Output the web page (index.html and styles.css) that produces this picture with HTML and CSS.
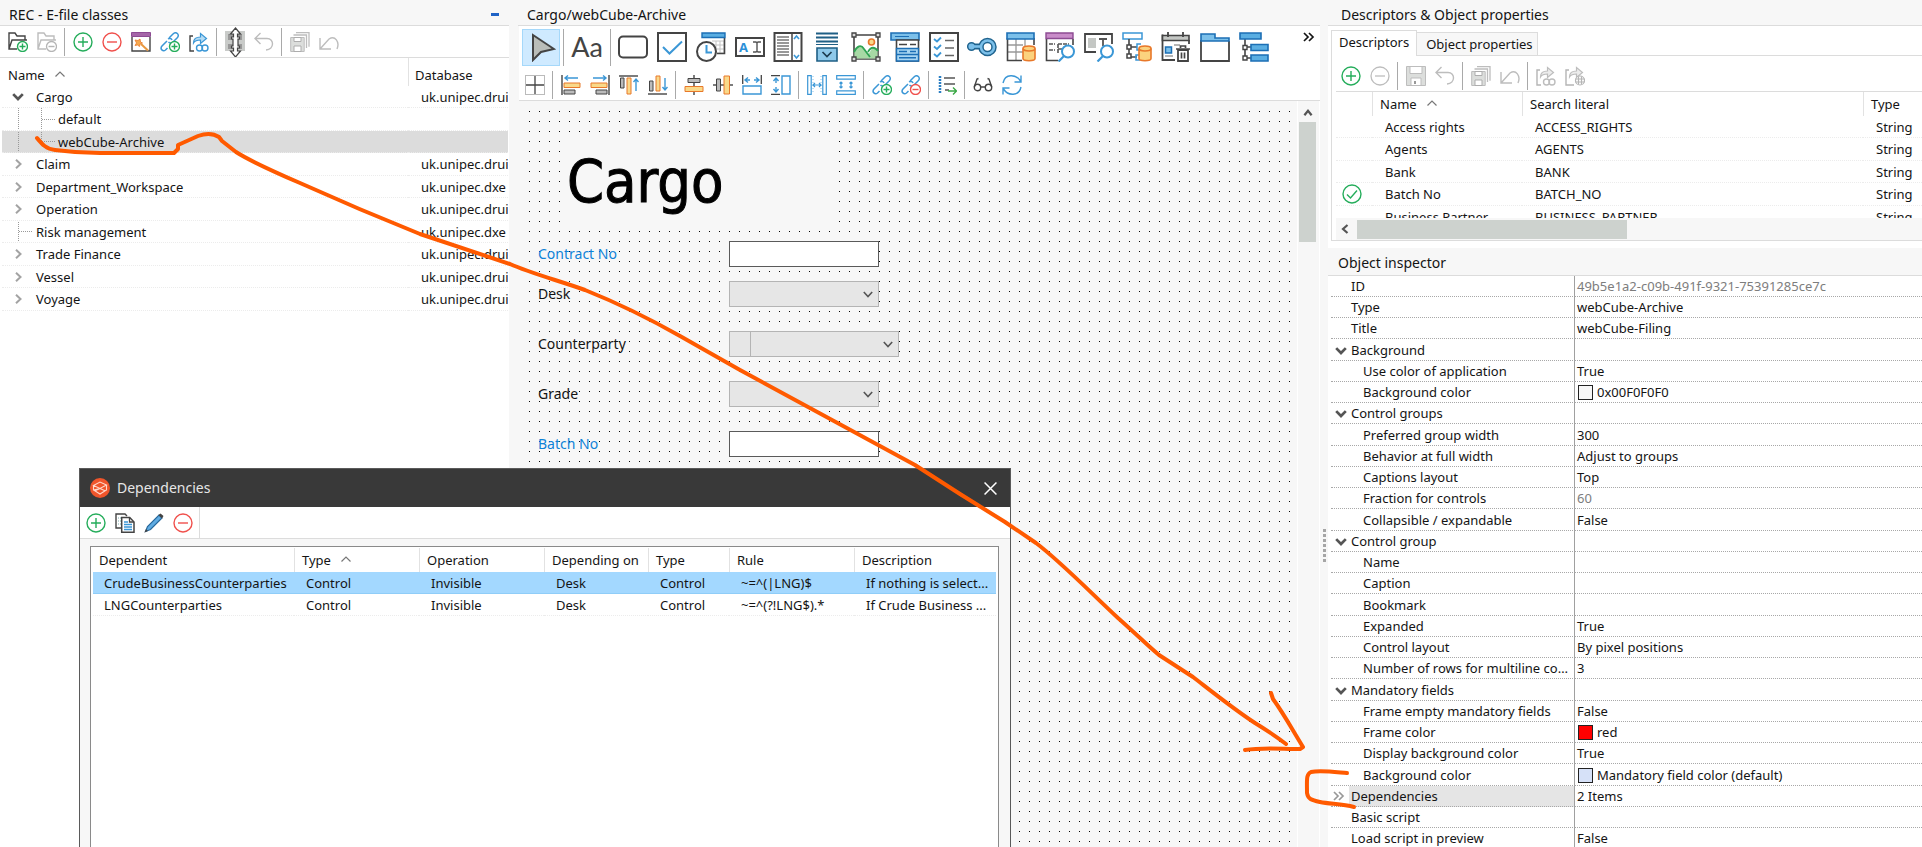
FILE: index.html
```html
<!DOCTYPE html>
<html lang="en">
<head>
<meta charset="utf-8">
<title>REC - E-file classes</title>
<link rel="stylesheet" href="styles.css">
</head>
<body>
<svg class="defs" aria-hidden="true">
  <symbol id="i-plus" viewBox="0 0 20 20"><g fill="none" stroke="#25ad5b" stroke-width="1.4"><circle cx="10" cy="10" r="9"/><path d="M10 5v10M5 10h10"/></g></symbol>
  <symbol id="i-minus" viewBox="0 0 20 20"><g fill="none" stroke="#f0504c" stroke-width="1.4"><circle cx="10" cy="10" r="9"/><path d="M5 10h10"/></g></symbol>
  <symbol id="i-minus-off" viewBox="0 0 20 20"><g fill="none" stroke="#bdbdbd" stroke-width="1.3"><circle cx="10" cy="10" r="9"/><path d="M5 10h10"/></g></symbol>
  <symbol id="i-ok" viewBox="0 0 20 20"><g fill="none" stroke="#25ad5b" stroke-width="1.4"><circle cx="10" cy="10" r="9"/><path d="M5 10.500l3.500 3.500L15 6.500"/></g></symbol>
  <symbol id="i-folder-add" viewBox="0 0 20 20"><path d="M9 17H1V1h6l2 3h8v4M1 17L4 8h15" fill="none" stroke="#444" stroke-width="1.400"/><circle cx="14.500" cy="14.500" r="5" fill="#fff" stroke="#25ad5b" stroke-width="1.400"/><path d="M14.500 11.500v6M11.500 14.500h6" stroke="#25ad5b" stroke-width="1.400"/></symbol>
  <symbol id="i-folder-del" viewBox="0 0 20 20"><path d="M9 17H1V1h6l2 3h8v4M1 17L4 8h15" fill="none" stroke="#bdbdbd" stroke-width="1.400"/><circle cx="14.500" cy="14.500" r="5" fill="#fff" stroke="#b5b5b5" stroke-width="1.300"/><path d="M11.500 14.500h6" stroke="#b5b5b5" stroke-width="1.400"/></symbol>
  <symbol id="i-wizard" viewBox="0 0 20 20"><path d="M1 5v14h18V5" fill="none" stroke="#444" stroke-width="1.400"/><path d="M.5.500h19v4H.5z" fill="#a566a8" stroke="#8d4b93"/><path d="M4 8l3 .5L9 7l.5 3 2 1-2.500 1-.5 2.500-2-1.500-2.500.5L5.500 11z" fill="#f6a94e" stroke="#e8782a" stroke-width=".8"/><path d="M10 12l7 6.500" stroke="#e89840" stroke-width="2"/></symbol>
  <symbol id="i-chain" viewBox="0 0 20 20"><g fill="none" stroke="#3b97d6" stroke-width="1.500"><path d="M9 6l4-4c3-3 7 .5 4.500 3.500L13 10c-1.500 1.500-3.500 1-4.500 0"/><path d="M8 7c1.500-1 3.500-.5 4 1M7 9l-5 5c-2.500 3 1 6 3.500 4l2-2"/></g></symbol>
  <symbol id="i-chain-add" viewBox="0 0 20 20"><use href="#i-chain"/><circle cx="14.500" cy="14.500" r="5" fill="#fff" stroke="#25ad5b" stroke-width="1.400"/><path d="M14.500 11.500v6M11.500 14.500h6" stroke="#25ad5b" stroke-width="1.400"/></symbol>
  <symbol id="i-chain-del" viewBox="0 0 20 20"><use href="#i-chain"/><circle cx="14.500" cy="14.500" r="5" fill="#fff" stroke="#f0504c" stroke-width="1.400"/><path d="M11.500 14.500h6" stroke="#f0504c" stroke-width="1.400"/></symbol>
  <symbol id="i-share" viewBox="0 0 20 20"><path d="M4 4H1v15h4" fill="none" stroke="#444" stroke-width="1.400"/><path d="M4.500 11c0-4 2.500-6 7-6V1.500l6 5-6 5V8c-3.500 0-5.500.5-7 3z" fill="#b6dcf4" stroke="#3b97d6" stroke-width="1.200"/><g fill="none" stroke="#3b97d6" stroke-width="1.400"><circle cx="10.500" cy="16" r="3"/><circle cx="16" cy="16" r="3"/></g></symbol>
  <symbol id="i-share-off" viewBox="0 0 20 20"><path d="M4 4H1v15h4" fill="none" stroke="#b5b5b5" stroke-width="1.400"/><path d="M4.500 11c0-4 2.500-6 7-6V1.500l6 5-6 5V8c-3.500 0-5.500.5-7 3z" fill="#ececec" stroke="#bdbdbd" stroke-width="1.200"/><g fill="none" stroke="#bdbdbd" stroke-width="1.400"><circle cx="10.500" cy="16" r="3"/><circle cx="16" cy="16" r="3"/></g></symbol>
  <symbol id="i-globe-off" viewBox="0 0 20 20"><path d="M4 4H1v15h8" fill="none" stroke="#b5b5b5" stroke-width="1.400"/><path d="M4.500 11c0-4 2.500-6 7-6V1.500l6 5-6 5V8c-3.500 0-5.500.5-7 3z" fill="#ececec" stroke="#bdbdbd" stroke-width="1.200"/><g fill="#fff" stroke="#b5b5b5" stroke-width="1.200"><circle cx="15" cy="14.500" r="4.500"/><path d="M10.500 13h9M10.500 16h9M13.500 10.500v8M16.500 10.500v8"/></g></symbol>
  <symbol id="i-save-off" viewBox="0 0 20 20"><path d="M.5.500h19v19H.5z" fill="#dcdedc" stroke="#bdbdbd"/><path d="M4 .5h12v7H4zM5 12h10v7.500H5z" fill="#fff" stroke="#bdbdbd"/><path d="M8 15h2v3H8z" fill="#999"/></symbol>
  <symbol id="i-saveall-off" viewBox="0 0 20 20"><path d="M6 .7h13v14M3.500 3h13v13" fill="none" stroke="#bdbdbd" stroke-width="1.300"/><path d="M.7 5.500h13.500v14H.7z" fill="#dcdedc" stroke="#bdbdbd"/><path d="M4 5.500h7v4H4zM4 14h7v5.500H4z" fill="#fff" stroke="#adadad"/></symbol>
  <symbol id="i-undo-off" viewBox="0 0 20 20"><path d="M6.500 1L1 6.500 6.500 12M1 6.500h12c7.500 0 7.500 11-1 11.500" fill="none" stroke="#bdbdbd" stroke-width="1.400"/></symbol>
  <symbol id="i-revert-off" viewBox="0 0 20 20"><path d="M1 6v11h11M1 17L10 7c6-4 11 3 8 10" fill="none" stroke="#bdbdbd" stroke-width="1.400"/></symbol>
  <symbol id="i-rename" viewBox="0 0 24 30"><path d="M2 4h20v20H2z" fill="#c9cbc9"/><path d="M5 7h6v6H5zM5 17h6v5H5zM14 7h5v6h-5zM14 17h5v5h-5z" fill="#999"/><path d="M12.500 1l5 6h-3v3h2v2h-1.500v7h1.500v2h-2v3h3l-5 6-5-6h3v-3h-2v-2h1.500v-7H8.500v-2h2V7h-3z" fill="#fff" stroke="#444" stroke-width="1.200"/></symbol>
  <symbol id="i-copy" viewBox="0 0 20 20"><path d="M6 15H1V1h9l2 2" fill="none" stroke="#444" stroke-width="1.400"/><path d="M3 5h4M3 8h3M3 11h3" stroke="#7aa" stroke-dasharray="1 1"/><path d="M6.700 4.500h8l4.300 4.500v10.300H6.700z" fill="#fff" stroke="#444" stroke-width="1.500"/><path d="M14.500 4.500V9H19" fill="none" stroke="#444" stroke-width="1.300"/><path d="M9 9h4M9 11.500h8M9 14h8M9 16.500h8" stroke="#3b97d6" stroke-width="1.300"/></symbol>
  <symbol id="i-pencil" viewBox="0 0 20 20"><path d="M1.500 18.500l2-5L15 2l3 3L6.500 16.500z" fill="#5fabe2" stroke="#27689c" stroke-width="1.200"/><path d="M14.500 2L16.500.500 19.500 3 18 5.500z" fill="#444"/><path d="M.5 19.500l1.500-3.500 2 2z" fill="#444"/></symbol>
  <symbol id="i-up" viewBox="0 0 10 6"><path d="M.5 5.500L5 1l4.500 4.500" fill="none" stroke="#777" stroke-width="1.200"/></symbol>
  <symbol id="i-down" viewBox="0 0 10 7"><path d="M.8 1L5 5.500 9.200 1" fill="none" stroke="#555" stroke-width="1.600"/></symbol>
  <symbol id="i-open" viewBox="0 0 10 7"><path d="M.8 1L5 5.200 9.200 1" fill="none" stroke="#555" stroke-width="2.400"/></symbol>
  <symbol id="i-right" viewBox="0 0 7 10"><path d="M1 .8L5.500 5 1 9.200" fill="none" stroke="#a3a3a3" stroke-width="2"/></symbol>
  <symbol id="i-caret-up" viewBox="0 0 8 8"><path d="M.8 6.500L4 2.500l3.200 4" fill="none" stroke="#555" stroke-width="2"/></symbol>
  <symbol id="i-caret-left" viewBox="0 0 8 10"><path d="M6.500 1L2 5l4.500 4" fill="none" stroke="#555" stroke-width="2.200"/></symbol>
  <symbol id="i-more" viewBox="0 0 12 10"><path d="M1 1l4 4-4 4M6 1l4 4-4 4" fill="none" stroke="currentColor" stroke-width="1.700"/></symbol>

  <symbol id="a-grid" viewBox="0 0 20 20"><path d="M.5.500h19v19H.5z" fill="none" stroke="#777" stroke-dasharray="1 1"/><path d="M10 1v18M1 10h18" stroke="#444" stroke-width="1.300"/></symbol>
  <symbol id="a-left" viewBox="0 0 20 20"><path d="M1 0v20" stroke="#444" stroke-width="1.400"/><path d="M17 3H4M7 0.500L4 3l3 2.500" fill="none" stroke="#3b97d6" stroke-width="1.400"/><path d="M3 8h16v4.500H3z" fill="#f9d98a" stroke="#e8782a"/><path d="M3 15h11v4H3z" fill="#bbb" stroke="#444"/></symbol>
  <symbol id="a-right" viewBox="0 0 20 20"><path d="M19 0v20" stroke="#444" stroke-width="1.400"/><path d="M3 3h13M13 0.500L16 3l-3 2.500" fill="none" stroke="#3b97d6" stroke-width="1.400"/><path d="M1 8h16v4.500H1z" fill="#f9d98a" stroke="#e8782a"/><path d="M6 15h11v4H6z" fill="#bbb" stroke="#444"/></symbol>
  <symbol id="a-top" viewBox="0 0 20 20"><path d="M0 1h19" stroke="#444" stroke-width="1.400"/><path d="M1.500 3h3.500v10H1.500z" fill="#bbb" stroke="#444"/><path d="M8 3h4v16H8z" fill="#f9d98a" stroke="#e8782a"/><path d="M17 16V4M14.500 7L17 4l2.500 3" fill="none" stroke="#3b97d6" stroke-width="1.400"/></symbol>
  <symbol id="a-bottom" viewBox="0 0 20 20"><path d="M0 19h19" stroke="#444" stroke-width="1.400"/><path d="M1.500 6h3.500v10H1.500z" fill="#bbb" stroke="#444"/><path d="M8 1h4v15H8z" fill="#f9d98a" stroke="#e8782a"/><path d="M17 3v12M14.500 12L17 15l2.500-3" fill="none" stroke="#3b97d6" stroke-width="1.400"/></symbol>
  <symbol id="a-hcenter" viewBox="0 0 20 20"><path d="M10 0v20" stroke="#444" stroke-width="1.400"/><path d="M4 3.500h12v4H4z" fill="#bbb" stroke="#444"/><path d="M1 11.500h18v5H1z" fill="#f9d98a" stroke="#e8782a"/></symbol>
  <symbol id="a-vcenter" viewBox="0 0 20 20"><path d="M0 10h20" stroke="#444" stroke-width="1.400"/><path d="M3.500 4h4v12h-4z" fill="#bbb" stroke="#444"/><path d="M11 1h5.500v18H11z" fill="#f9d98a" stroke="#e8782a"/></symbol>
  <symbol id="a-width" viewBox="0 0 20 20"><path d="M.7 0v9M19.300 0v9" stroke="#444" stroke-width="1.300"/><path d="M1 11h18v8H1z" fill="none" stroke="#3b97d6" stroke-width="1.400"/><path d="M3 5h5M12 5h5M6 2.500L3 5l3 2.500M14 2.500L17 5l-3 2.500" fill="none" stroke="#3b97d6" stroke-width="1.400"/></symbol>
  <symbol id="a-height" viewBox="0 0 20 20"><path d="M0 .7h9M0 19.300h9" stroke="#444" stroke-width="1.300"/><path d="M11 1h8v18h-8z" fill="none" stroke="#3b97d6" stroke-width="1.400"/><path d="M5 3v5M5 12v5M2.500 6L5 3l2.500 3M2.500 14L5 17l2.500-3" fill="none" stroke="#3b97d6" stroke-width="1.400"/></symbol>
  <symbol id="a-hspace" viewBox="0 0 20 20"><g fill="none" stroke="#3b97d6" stroke-width="1.200"><path d="M.7.700h3.500v18.600H.7zM15.800.700h3.500v18.600h-3.500z"/><path d="M6 10h8M8 8l-2 2 2 2M12 8l2 2-2 2"/></g><path d="M6 1v18M14 1v18" stroke="#3b97d6" stroke-dasharray="1 2" stroke-width=".6"/></symbol>
  <symbol id="a-vspace" viewBox="0 0 20 20"><g fill="none" stroke="#3b97d6" stroke-width="1.200"><path d="M.7.700h18.600v3.500H.7zM.7 15.800h18.600v3.500H.7z"/><path d="M5 7v6M3.500 8.500L5 7l1.500 1.500M3.500 11.500L5 13l1.500-1.500M15 7v6M13.500 8.500L15 7l1.500 1.500M13.500 11.500L15 13l1.500-1.500"/></g></symbol>
  <symbol id="a-order" viewBox="0 0 20 20"><path d="M3 1v18" stroke="#2b7fc4" stroke-width="2.500" stroke-dasharray="2 1"/><path d="M7 3h11M7 9h11M8 15h4" stroke="#555" stroke-width="1.400"/><path d="M11 16h8M16 12.500l3.500 3.500-3.500 3.500" fill="none" stroke="#3aa845" stroke-width="1.400"/></symbol>
  <symbol id="a-glasses" viewBox="0 0 20 20"><g fill="none" stroke="#444" stroke-width="1.400"><circle cx="4.500" cy="12.500" r="3.200"/><circle cx="15.500" cy="12.500" r="3.200"/><path d="M8 12h4M1.300 12L4 4l1.500-.5M18.700 12L16 4l-1.500-.5"/></g></symbol>
  <symbol id="a-refresh" viewBox="0 0 20 20"><g fill="none" stroke="#3b97d6" stroke-width="1.400"><path d="M1 8C3-1.500 14-1 18.500 6M19 .5V7h-6.500M19 12c-2 9.500-13 9-17.500 2M1 19.500V13h6.500"/></g></symbol>

  <symbol id="b-rect" viewBox="0 0 30 30"><rect x="1" y="4.500" width="28" height="21" rx="4" fill="none" stroke="#444" stroke-width="2"/></symbol>
  <symbol id="b-check" viewBox="0 0 30 30"><path d="M1 1h28v28H1z" fill="#fff" stroke="#444" stroke-width="2"/><path d="M6 15l6.500 6.500L25 9.500" fill="none" stroke="#3b97d6" stroke-width="2"/></symbol>
  <symbol id="b-clock" viewBox="0 0 30 30"><path d="M16 9h12v12H18M20 9v12M24 9v12M16 13h12M16 17h12" fill="none" stroke="#c4c4c4"/><path d="M28.500 6v15.500H21" fill="none" stroke="#444" stroke-width="1.600"/><path d="M6 1h23v4.500H6z" fill="#5aaee2" stroke="#1c6fb5" stroke-width="1.400"/><circle cx="10.500" cy="19.500" r="9.500" fill="#fff" stroke="#444" stroke-width="2"/><path d="M10.500 13v7.500H16" fill="none" stroke="#3b97d6" stroke-width="2"/></symbol>
  <symbol id="b-list" viewBox="0 0 30 30"><path d="M1.500 1h27v28h-27z" fill="#fff" stroke="#444" stroke-width="2"/><path d="M19 1v28" stroke="#444" stroke-width="1.500"/><path d="M4 5h12M4 8h12M4 11h12M4 14h12M4 17h12M4 20h12M4 23h12" stroke="#777" stroke-width="1.300"/><path d="M21 7l2.500-3L26 7M21 23l2.500 3 2.500-3" fill="none" stroke="#3b97d6" stroke-width="1.600"/></symbol>
  <symbol id="b-combo" viewBox="0 0 30 30"><path d="M4 1.500h22M4 5.500h22M4 9.500h22" stroke="#1f5f85" stroke-width="1.800"/><path d="M4 12.500h22" stroke="#1f5f85"/><path d="M5 16h20v13H5z" fill="#8ec9ea" stroke="#1f5f85" stroke-width="1.600"/><path d="M10.500 20l4.500 4.500 4.500-4.500" fill="none" stroke="#1d3c50" stroke-width="1.700"/></symbol>
  <symbol id="b-image" viewBox="0 0 30 30"><path d="M3 3h24v24H3z" fill="#fff" stroke="#444" stroke-width="1.600"/><path d="M3.500 26.500V19c3-5 7-7 10-2l4 5 4-6c2-1 4-1 5 3v7.500z" fill="#a7d9a5"/><path d="M3 20c3-6 7-8 10-3l6 8M17 20c3-6 7-5 10-1" fill="none" stroke="#2fa353" stroke-width="1.800"/><circle cx="20.500" cy="10" r="3" fill="#f9d98a" stroke="#e8782a" stroke-width="1.600"/><g fill="#ddd" stroke="#444" stroke-width="1.300"><path d="M1 1h4v4H1zM25 1h4v4h-4zM1 25h4v4H1zM25 25h4v4h-4z"/></g></symbol>
  <symbol id="b-menu" viewBox="0 0 30 30"><path d="M1 1h28v7H1z" fill="#7cc0ea" stroke="#1c6fb5" stroke-width="1.600"/><path d="M5 4.500h14" stroke="#1c6fb5"/><path d="M6.500 8h22v21h-22z" fill="#fff" stroke="#444" stroke-width="1.600"/><path d="M9 12.500h8M20 12.500h6" stroke="#444" stroke-width="1.600"/><path d="M6.500 16.500h22v6h-22zM6.500 22.500h22V29h-22z" fill="#a8d6f2" stroke="#1c6fb5" stroke-width="1.400"/><path d="M9 19.500h8M20 19.500h6M9 25.800h17" stroke="#1c6fb5" stroke-width="1.600"/></symbol>
  <symbol id="b-checks" viewBox="0 0 30 30"><path d="M1 1h28v28H1z" fill="#fff" stroke="#444" stroke-width="2"/><path d="M5 7l3 2.500L12 5.500M5 14.500l3 2.500L12 13M5 22l3 2.500 4-4" fill="none" stroke="#3b97d6" stroke-width="1.800"/><path d="M16 8.500h9M16 16h9M16 23.500h9" stroke="#666" stroke-width="1.600"/></symbol>
  <symbol id="b-node" viewBox="0 0 30 30"><path d="M8 14.500h5" stroke="#20648f" stroke-width="6"/><circle cx="4.500" cy="14.500" r="3.800" fill="#7cc0ea" stroke="#20648f" stroke-width="1.500"/><circle cx="20.500" cy="15" r="6.500" fill="#fff" stroke="#20648f" stroke-width="5.500"/><circle cx="20.500" cy="15" r="6.500" fill="none" stroke="#7cc0ea" stroke-width="2.600"/><path d="M6 14.500h8" stroke="#7cc0ea" stroke-width="2.600"/></symbol>
  <symbol id="b-cyl" viewBox="0 0 14 17"><path d="M1 3.500v10c0 3 12 3 12 0v-10" fill="#fbd27e" stroke="#e8782a" stroke-width="1.600"/><ellipse cx="7" cy="3.500" rx="6" ry="2.500" fill="#fbd27e" stroke="#e8782a" stroke-width="1.600"/></symbol>
  <symbol id="b-tabledb" viewBox="0 0 30 30"><path d="M2 13h15M2 20h15M10 6v22M19 6v8" fill="none" stroke="#999" stroke-width="1.300"/><path d="M1.500 6v22.500H16M28 6v7" fill="none" stroke="#444" stroke-width="1.600"/><path d="M1 1h27v6H1z" fill="#7cc0ea" stroke="#1c6fb5" stroke-width="1.600"/><use href="#b-cyl" x="16" y="13" width="14" height="17"/></symbol>
  <symbol id="b-formfind" viewBox="0 0 30 30"><path d="M1.500 7v21.500H13M28 7v6" fill="none" stroke="#444" stroke-width="1.600"/><path d="M1 1h27v5.500H1z" fill="#c98cc9" stroke="#8d4b93" stroke-width="1.400"/><path d="M4 12h6M4 18h6M13 12v10M13 12h11M13 17h5" stroke="#555" stroke-width="1.600" stroke-dasharray="4 1"/><circle cx="23" cy="19.500" r="6" fill="#fff" stroke="#3b97d6" stroke-width="2"/><path d="M19 24l-5.500 5.500" stroke="#3b97d6" stroke-width="2.200"/></symbol>
  <symbol id="b-findtext" viewBox="0 0 30 30"><path d="M12 20H1V2h27v10" fill="#fff" stroke="#444" stroke-width="1.800"/><path d="M4 6h8v10H4z" fill="#c4c7c4"/><path d="M15 7h8M19 7v7" stroke="#555" stroke-width="1.800"/><circle cx="23" cy="19.500" r="6" fill="#fff" stroke="#3b97d6" stroke-width="2"/><path d="M19 24l-5.500 5.500" stroke="#3b97d6" stroke-width="2.200"/></symbol>
  <symbol id="b-treedb" viewBox="0 0 30 30"><path d="M1 1h19v6H1z" fill="#fff" stroke="#3b97d6" stroke-width="1.500"/><path d="M7 7v17M8 15h7M8 25h7" fill="none" stroke="#444" stroke-width="1.600"/><path d="M5 13h4v4H5zM5 22h4v4H5z" fill="#fff" stroke="#444" stroke-width="1.500"/><path d="M19 12h-4v6h4M18 23h-4v5h4" fill="none" stroke="#3b97d6" stroke-width="1.500"/><use href="#b-cyl" x="16" y="13" width="14" height="17"/></symbol>
  <symbol id="b-caltrash" viewBox="0 0 30 30"><path d="M1.500 2.500V28H14M28 8v4" fill="none" stroke="#444" stroke-width="1.800"/><path d="M1.500 3.500H28v5H1.500z" fill="#c4c7c4" stroke="#444" stroke-width="1.600"/><path d="M7 0v5M22 0v5" stroke="#444" stroke-width="1.800"/><path d="M4.500 15h6v6h-6z" fill="#7cc0ea" stroke="#1c6fb5" stroke-width="1.500"/><path d="M13 13h6M4 24h8" stroke="#b5b5b5" stroke-width="2"/><path d="M17 18h10v11H17z" fill="#fff" stroke="#444" stroke-width="1.800"/><path d="M15 17h14M19.500 16v-2h5v2M20.500 20.500v6M23.500 20.500v6" fill="none" stroke="#444" stroke-width="1.700"/></symbol>
  <symbol id="b-folder" viewBox="0 0 30 30"><path d="M1 8v21h28V9" fill="#fff" stroke="#444" stroke-width="1.800"/><path d="M1 9V2h14v4h14v3z" fill="#7cc0ea" stroke="#1c6fb5" stroke-width="1.600"/></symbol>
  <symbol id="b-tree" viewBox="0 0 30 30"><path d="M6 7v19h6M6 15h6" fill="none" stroke="#444" stroke-width="1.600"/><path d="M4 13.500h4v4H4zM4 24h4v4H4z" fill="#fff" stroke="#444" stroke-width="1.400"/><path d="M1 1h21v6H1zM12 12.500h17v6H12zM12 23h17v6H12z" fill="#5aaee2" stroke="#1c6fb5" stroke-width="1.600"/></symbol>
</svg>

<div class="app">
  <section class="classes">
    <header class="caption"><h2>REC - E-file classes</h2><button class="minimize" aria-label="Minimize"></button></header>
    <div class="tools">
      <button aria-label="Add folder"><svg><use href="#i-folder-add"/></svg></button>
      <button aria-label="Remove folder"><svg><use href="#i-folder-del"/></svg></button>
      <i class="sep"></i>
      <button aria-label="Add"><svg><use href="#i-plus"/></svg></button>
      <button aria-label="Remove"><svg><use href="#i-minus"/></svg></button>
      <button aria-label="Wizard"><svg><use href="#i-wizard"/></svg></button>
      <button aria-label="Add link"><svg><use href="#i-chain-add"/></svg></button>
      <button aria-label="Export link"><svg><use href="#i-share"/></svg></button>
      <i class="sep"></i>
      <button aria-label="Rename"><svg class="tall"><use href="#i-rename"/></svg></button>
      <button aria-label="Undo"><svg><use href="#i-undo-off"/></svg></button>
      <i class="sep"></i>
      <button aria-label="Save all"><svg><use href="#i-saveall-off"/></svg></button>
      <button aria-label="Revert"><svg><use href="#i-revert-off"/></svg></button>
    </div>
    <table class="tree">
      <colgroup><col><col class="col-db"></colgroup>
      <thead><tr><th>Name <svg class="sort"><use href="#i-up"/></svg></th><th>Database</th></tr></thead>
      <tbody>
        <tr><td><div class="node"><svg class="open"><use href="#i-open"/></svg>Cargo</div></td><td>uk.unipec.druid</td></tr>
        <tr><td><div class="node"><svg class="guide deep"><path d="M16.500 0v24M39.500 0v24M40 11.500h13"/></svg>default</div></td><td></td></tr>
        <tr class="picked"><td><div class="node"><svg class="guide deep"><path d="M16.500 0v24M39.500 0v12M40 11.500h13"/></svg>webCube-Archive</div></td><td></td></tr>
        <tr><td><div class="node"><svg class="shut"><use href="#i-right"/></svg>Claim</div></td><td>uk.unipec.druid</td></tr>
        <tr><td><div class="node"><svg class="shut"><use href="#i-right"/></svg>Department_Workspace</div></td><td>uk.unipec.dxe</td></tr>
        <tr><td><div class="node"><svg class="shut"><use href="#i-right"/></svg>Operation</div></td><td>uk.unipec.druid</td></tr>
        <tr><td><div class="node"><svg class="guide"><path d="M16.500 0v24M17 11.500h14"/></svg>Risk management</div></td><td>uk.unipec.dxe</td></tr>
        <tr><td><div class="node"><svg class="shut"><use href="#i-right"/></svg>Trade Finance</div></td><td>uk.unipec.druid</td></tr>
        <tr><td><div class="node"><svg class="shut"><use href="#i-right"/></svg>Vessel</div></td><td>uk.unipec.druid</td></tr>
        <tr><td><div class="node"><svg class="shut"><use href="#i-right"/></svg>Voyage</div></td><td>uk.unipec.druid</td></tr>
      </tbody>
    </table>
  </section>

  <main class="editor">
    <header class="caption"><h2>Cargo/webCube-Archive</h2></header>
    <div class="bars">
      <div class="palette">
        <button class="active" aria-label="Select"><svg viewBox="0 0 30 30"><path d="M7 3v25l8-8 13-3z" fill="#b9bdb9" stroke="#444" stroke-width="2"/></svg></button>
        <i class="sep"></i>
        <button class="label-tool">Aa</button>
        <i class="sep"></i>
        <div class="controls">
          <button aria-label="Button"><svg><use href="#b-rect"/></svg></button>
          <button aria-label="Check box"><svg><use href="#b-check"/></svg></button>
          <button aria-label="Date"><svg><use href="#b-clock"/></svg></button>
          <button aria-label="Text field"><svg viewBox="0 0 30 30"><path d="M1 6h28v18H1z" fill="#fff" stroke="#444" stroke-width="2"/><text x="4" y="20" class="glyph-a">A</text><path d="M18 10h3l1 1 1-1h3M18 20h3l1-1 1 1h3M22 11v8" fill="none" stroke="#555" stroke-width="1.400"/></svg></button>
          <button aria-label="List"><svg><use href="#b-list"/></svg></button>
          <button aria-label="Combo box"><svg><use href="#b-combo"/></svg></button>
          <button aria-label="Image"><svg><use href="#b-image"/></svg></button>
          <button aria-label="Menu"><svg><use href="#b-menu"/></svg></button>
          <button aria-label="Check list"><svg><use href="#b-checks"/></svg></button>
          <button aria-label="Node"><svg><use href="#b-node"/></svg></button>
          <button aria-label="Data table"><svg><use href="#b-tabledb"/></svg></button>
          <button aria-label="Form search"><svg><use href="#b-formfind"/></svg></button>
          <button aria-label="Text search"><svg><use href="#b-findtext"/></svg></button>
          <button aria-label="Data tree"><svg><use href="#b-treedb"/></svg></button>
          <button aria-label="Retention"><svg><use href="#b-caltrash"/></svg></button>
          <button aria-label="Folder"><svg><use href="#b-folder"/></svg></button>
          <button aria-label="Tree"><svg><use href="#b-tree"/></svg></button>
        </div>
        <button class="overflow" aria-label="More"><svg><use href="#i-more"/></svg></button>
      </div>
      <div class="tools align">
        <button aria-label="Grid"><svg><use href="#a-grid"/></svg></button>
        <i class="sep"></i>
        <button aria-label="Align left"><svg><use href="#a-left"/></svg></button>
        <button aria-label="Align right"><svg><use href="#a-right"/></svg></button>
        <button aria-label="Align top"><svg><use href="#a-top"/></svg></button>
        <button aria-label="Align bottom"><svg><use href="#a-bottom"/></svg></button>
        <i class="sep"></i>
        <button aria-label="Center horizontally"><svg><use href="#a-hcenter"/></svg></button>
        <button aria-label="Center vertically"><svg><use href="#a-vcenter"/></svg></button>
        <button aria-label="Same width"><svg><use href="#a-width"/></svg></button>
        <button aria-label="Same height"><svg><use href="#a-height"/></svg></button>
        <i class="sep"></i>
        <button aria-label="Space horizontally"><svg><use href="#a-hspace"/></svg></button>
        <button aria-label="Space vertically"><svg><use href="#a-vspace"/></svg></button>
        <i class="sep"></i>
        <button aria-label="Link"><svg><use href="#i-chain-add"/></svg></button>
        <button aria-label="Unlink"><svg><use href="#i-chain-del"/></svg></button>
        <i class="sep"></i>
        <button aria-label="Tab order"><svg><use href="#a-order"/></svg></button>
        <i class="sep"></i>
        <button aria-label="Preview"><svg><use href="#a-glasses"/></svg></button>
        <button aria-label="Refresh"><svg><use href="#a-refresh"/></svg></button>
      </div>
    </div>
    <div class="stage">
      <div class="surface">
        <h1 class="form-title">Cargo</h1>
        <label class="f-label link row-1" for="contract">Contract No</label><input class="f-box row-1" id="contract" type="text">
        <label class="f-label row-2" for="desk">Desk</label><span class="f-box pick row-2"><select id="desk"></select><svg><use href="#i-down"/></svg></span>
        <label class="f-label row-3" for="party">Counterparty</label><span class="f-box pick wide row-3"><select id="party"></select><svg><use href="#i-down"/></svg></span>
        <label class="f-label row-4" for="grade">Grade</label><span class="f-box pick row-4"><select id="grade"></select><svg><use href="#i-down"/></svg></span>
        <label class="f-label link row-5" for="batch">Batch No</label><input class="f-box row-5" id="batch" type="text">
      </div>
      <div class="vscroll"><svg><use href="#i-caret-up"/></svg><div class="thumb"></div></div>
    </div>
  </main>

  <aside class="side">
    <header class="caption"><h2>Descriptors &amp; Object properties</h2></header>
    <div class="tabs"><button class="tab current">Descriptors</button><button class="tab">Object properties</button></div>
    <div class="descriptors">
      <div class="tools">
        <button aria-label="Add"><svg><use href="#i-plus"/></svg></button>
        <button aria-label="Remove"><svg><use href="#i-minus-off"/></svg></button>
        <i class="sep"></i>
        <button aria-label="Save"><svg><use href="#i-save-off"/></svg></button>
        <button aria-label="Undo"><svg><use href="#i-undo-off"/></svg></button>
        <i class="sep"></i>
        <button aria-label="Save all"><svg><use href="#i-saveall-off"/></svg></button>
        <button aria-label="Revert"><svg><use href="#i-revert-off"/></svg></button>
        <i class="sep"></i>
        <button aria-label="Export link"><svg><use href="#i-share-off"/></svg></button>
        <button aria-label="Export web"><svg><use href="#i-globe-off"/></svg></button>
      </div>
      <div class="clip">
        <table class="fields">
          <colgroup><col class="c-mark"><col class="c-name"><col><col class="c-type"></colgroup>
          <thead><tr><th></th><th>Name <svg class="sort"><use href="#i-up"/></svg></th><th>Search literal</th><th>Type</th></tr></thead>
          <tbody>
            <tr><td></td><td>Access rights</td><td>ACCESS_RIGHTS</td><td>String</td></tr>
            <tr><td></td><td>Agents</td><td>AGENTS</td><td>String</td></tr>
            <tr><td></td><td>Bank</td><td>BANK</td><td>String</td></tr>
            <tr><td><svg class="mark"><use href="#i-ok"/></svg></td><td>Batch No</td><td>BATCH_NO</td><td>String</td></tr>
            <tr><td></td><td>Business Partner</td><td>BUSINESS_PARTNER</td><td>String</td></tr>
          </tbody>
        </table>
      </div>
      <div class="hscroll"><svg><use href="#i-caret-left"/></svg><div class="thumb"></div></div>
    </div>
    <header class="caption inspector-head"><h2>Object inspector</h2></header>
    <div class="inspector">
      <table class="props">
        <colgroup><col class="c-key"><col></colgroup>
        <tbody>
          <tr><th>ID</th><td class="dim">49b5e1a2-c09b-491f-9321-75391285ce7c</td></tr>
          <tr><th>Type</th><td>webCube-Archive</td></tr>
          <tr><th>Title</th><td>webCube-Filing</td></tr>
          <tr><th class="group"><svg><use href="#i-open"/></svg>Background</th><td></td></tr>
          <tr><th class="sub">Use color of application</th><td>True</td></tr>
          <tr><th class="sub">Background color</th><td><i class="swatch grey"></i>0x00F0F0F0</td></tr>
          <tr><th class="group"><svg><use href="#i-open"/></svg>Control groups</th><td></td></tr>
          <tr><th class="sub">Preferred group width</th><td>300</td></tr>
          <tr><th class="sub">Behavior at full width</th><td>Adjust to groups</td></tr>
          <tr><th class="sub">Captions layout</th><td>Top</td></tr>
          <tr><th class="sub">Fraction for controls</th><td class="dim">60</td></tr>
          <tr><th class="sub">Collapsible / expandable</th><td>False</td></tr>
          <tr><th class="group"><svg><use href="#i-open"/></svg>Control group</th><td></td></tr>
          <tr><th class="sub">Name</th><td></td></tr>
          <tr><th class="sub">Caption</th><td></td></tr>
          <tr><th class="sub">Bookmark</th><td></td></tr>
          <tr><th class="sub">Expanded</th><td>True</td></tr>
          <tr><th class="sub">Control layout</th><td>By pixel positions</td></tr>
          <tr><th class="sub">Number of rows for multiline controls</th><td>3</td></tr>
          <tr><th class="group"><svg><use href="#i-open"/></svg>Mandatory fields</th><td></td></tr>
          <tr><th class="sub">Frame empty mandatory fields</th><td>False</td></tr>
          <tr><th class="sub">Frame color</th><td><i class="swatch red"></i>red</td></tr>
          <tr><th class="sub">Display background color</th><td>True</td></tr>
          <tr><th class="sub">Background color</th><td><i class="swatch blue"></i>Mandatory field color (default)</td></tr>
          <tr class="focus"><th class="group"><svg class="dbl"><use href="#i-more"/></svg>Dependencies</th><td>2 Items</td></tr>
          <tr><th>Basic script</th><td></td></tr>
          <tr><th>Load script in preview</th><td>False</td></tr>
        </tbody>
      </table>
    </div>
  </aside>
  <i class="grip"></i>

  <div class="dialog" role="dialog" aria-labelledby="dlg">
    <header class="dlg-head">
      <svg class="logo" viewBox="0 0 20 20"><circle cx="10" cy="10" r="10" fill="#f0552b"/><path d="M3.500 7.500L10 4l6.500 3L10 10.500zM3.500 7.500V12l6.500 4 6.500-4V7M10 10.500L4.500 13M10 10.500l5.500 2.500M3.500 12l6.500-1.500" fill="none" stroke="#ffd9cc" stroke-width="1.100"/></svg>
      <h2 id="dlg">Dependencies</h2>
      <button class="close" aria-label="Close"><svg viewBox="0 0 12 12"><path d="M.5.500l11 11M11.500.500l-11 11" stroke="#fff" stroke-width="1.400"/></svg></button>
    </header>
    <div class="tools dlg-tools">
      <button aria-label="Add"><svg><use href="#i-plus"/></svg></button>
      <button aria-label="Copy"><svg><use href="#i-copy"/></svg></button>
      <button aria-label="Edit"><svg><use href="#i-pencil"/></svg></button>
      <button aria-label="Remove"><svg><use href="#i-minus"/></svg></button>
    </div>
    <div class="dlg-body">
      <table class="deps">
        <colgroup><col class="d-1"><col class="d-2"><col class="d-2"><col class="d-3"><col class="d-4"><col class="d-2"><col></colgroup>
        <thead><tr><th>Dependent</th><th>Type <svg class="sort"><use href="#i-up"/></svg></th><th>Operation</th><th>Depending on</th><th>Type</th><th>Rule</th><th>Description</th></tr></thead>
        <tbody>
          <tr class="picked"><td>CrudeBusinessCounterparties</td><td>Control</td><td>Invisible</td><td>Desk</td><td>Control</td><td>~=^(|LNG)$</td><td>If nothing is select...</td></tr>
          <tr><td>LNGCounterparties</td><td>Control</td><td>Invisible</td><td>Desk</td><td>Control</td><td>~=^(?!LNG$).*</td><td>If Crude Business ...</td></tr>
        </tbody>
      </table>
    </div>
  </div>

  <svg class="ink" viewBox="0 0 1922 847" preserveAspectRatio="xMinYMin meet" aria-hidden="true">
    <path d="M37 138C42 144 46 149 55 150C70 152 85 153 100 153H174L178 149V145L198 136C206 133 213 133 219 137L222 141L236 152C250 161 270 170 300 183C340 201 380 218 420 234L510 264C530 273 560 281 585 290C620 304 650 319 680 336L740 370L915 465L960 494L1005 522L1036 543C1060 561 1090 592 1118 618C1135 633 1148 646 1159 655L1193 677C1215 694 1235 710 1255 723C1268 731 1277 737 1286 744"/>
    <path d="M1271 693L1273 699C1284 714 1293 731 1303 747L1300 749C1282 749 1262 747 1245 750"/>
    <path d="M1347 773C1335 772 1320 770 1311 772C1306 774 1307 780 1307 793C1308 799 1311 800 1320 802C1330 804 1342 804 1354 807"/>
  </svg>
</div>
</body>
</html>
```
FILE: styles.css
```css
:root {
  --panel: #f7f7f7;
  --line: #dcdcdc;
  --text: #141414;
  --blue: #0f83d8;
  --thumb: #cdd2ce;
}

* { box-sizing: border-box; }

body {
  margin: 0;
  background: #fff;
  color: var(--text);
  font-family: "Noto Sans", "Open Sans", sans-serif;
  font-size: 13px;
  line-height: 20px;
}

.defs { position: absolute; width: 0; height: 0; }

button { padding: 0; border: 0; background: none; color: inherit; font: inherit; }
h1, h2 { margin: 0; font-weight: 400; }

.app {
  position: relative;
  display: grid;
  grid-template-columns: 509px minmax(0, 1fr) 594px;
  height: 100vh;
  overflow: hidden;
}

.caption {
  display: flex;
  align-items: center;
  justify-content: space-between;
  flex: none;
  height: 26px;
  padding: 4px 10px 0 9px;
  background: var(--panel);
  border-bottom: 1px solid var(--line);
}
.caption h2 { font-size: 14px; }
.minimize { width: 8px; height: 3px; background: #1f63c6; }

/* toolbars */
.tools { display: flex; align-items: center; height: 32px; }
.tools button { display: flex; flex: none; align-items: center; justify-content: center; width: 29px; height: 28px; }
.tools svg { width: 20px; height: 20px; }
.tools svg.tall { width: 24px; height: 30px; }
.sep { flex: none; width: 1px; height: 28px; margin: 0 3px; background: #a9a9a9; }

/* tables shared */
table { width: 100%; border-spacing: 0; table-layout: fixed; }
th, td { padding: 0; font-weight: 400; text-align: left; white-space: nowrap; overflow: hidden; }
.sort { width: 10px; height: 6px; margin-left: 7px; vertical-align: 3px; }

/* class tree */
.classes { min-width: 0; overflow: hidden; }
.classes .tools { padding: 1px 0 0 3px; border-bottom: 1px solid var(--line); }
.tree { width: calc(100% - 3px); margin: 0 1px 0 2px; }
.col-db { width: 100px; }
.tree thead th { height: 28px; padding: 5px 0 0 6px; }
.tree th:last-child { border-left: 1px solid #e2e2e2; }
.tree tbody tr { height: 22px; }
.tree tbody tr:nth-child(even) { height: 23px; }
.tree tbody td { border-bottom: 1px dotted #ececec; line-height: 20px; }
.tree tbody td:last-child { padding-left: 13px; }
.tree .picked td { background: #dcdcdc; }
.node { display: flex; align-items: center; height: 21px; }
.node .open { width: 12px; height: 8px; margin: 0 12px 0 10px; }
.node .shut { width: 7px; height: 10px; margin: 0 14px 0 13px; }
.guide { width: 34px; height: 23px; fill: none; stroke: #999; stroke-dasharray: 1 1; }
.guide.deep { width: 56px; }

/* form editor */
.editor { display: flex; flex-direction: column; min-width: 0; padding: 0 8px 0 9px; background: var(--panel); }
.bars { flex: none; background: #fff; border-bottom: 1px solid var(--line); margin-left: 1px; }
.palette { display: flex; align-items: center; height: 42px; padding-left: 3px; }
.palette .sep { height: 37px; }
.palette button { display: flex; align-items: center; justify-content: center; height: 37px; }
.palette svg { width: 30px; height: 30px; }
.palette .active { width: 38px; background: #cfeaff; border: 1px solid #a5d8fa; }
.palette .label-tool { width: 40px; color: #444; font-family: Lato, sans-serif; font-size: 27px; }
.controls { display: flex; flex: 1; }
.controls button { flex: 1; }
.palette .overflow { width: 47px; align-items: flex-start; padding: 3px 0 0 24px; }
.palette .overflow svg { width: 12px; height: 10px; }
.glyph-a { fill: #2b8fd8; font: 700 13px "Open Sans", sans-serif; }
.align { padding: 1px 0 0 1px; }
.stage { display: flex; flex: 1; min-height: 0; margin-left: 2px; padding: 10px 0 0 9px; }
.surface {
  position: relative;
  flex: 1;
  margin-right: 7px;
  background:
    linear-gradient(90deg, transparent 1px, var(--panel) 1px) 0 0 / 10px 10px,
    linear-gradient(#000 1px, var(--panel) 1px) 0 0 / 10px 10px;
}
.form-title {
  position: absolute;
  left: 32px;
  top: 24px;
  width: 275px;
  height: 95px;
  padding-left: 6px;
  background: var(--panel);
  color: #000;
  font-family: "DejaVu Sans Condensed", "DejaVu Sans", sans-serif;
  font-size: 59px;
  line-height: 94px;
  -webkit-text-stroke: 1px #000;
}
.f-label { position: absolute; left: 9px; font-size: 14px; line-height: 26px; }
.f-label.link { color: var(--blue); }
.f-box { position: absolute; left: 200px; width: 150px; height: 26px; margin: 0; border: 1px solid #5a5a5a; background: #fff; border-radius: 0; }
.pick { border-color: #b4b4b4; background: #e6e6e6; }
.pick.wide { width: 170px; }
.pick.wide select { width: 148px; border-left: 1px solid #b4b4b4; margin-left: 20px; }
.pick select { display: block; width: 100%; height: 100%; border: 0; border-radius: 0; background: none; appearance: none; }
.pick svg { position: absolute; right: 5px; top: 9px; width: 10px; height: 7px; }
.row-1 { top: 130px; }
.row-2 { top: 170px; }
.row-3 { top: 220px; }
.row-4 { top: 270px; }
.row-5 { top: 320px; }
.vscroll { width: 23px; margin-top: -10px; padding: 7px 3px 0 1px; border-left: 1px solid #fff; border-right: 1px solid #fff; }
.vscroll svg { display: block; width: 10px; height: 9px; margin: 0 auto 5px; }
.vscroll .thumb { height: 120px; background: var(--thumb); }

/* right side */
.side { display: flex; flex-direction: column; min-width: 0; min-height: 0; }
.side > .caption { padding-left: 13px; }
.tabs { position: relative; z-index: 1; display: flex; flex: none; align-items: flex-end; height: 30px; padding-left: 3px; }
.tab { height: 23px; margin-bottom: 1px; padding: 0 4px 0 9px; border: 1px solid var(--line); border-left: 0; border-bottom: 0; background: var(--panel); }
.tab.current { height: 26px; margin-bottom: 0; padding: 0 7px 4px; border-left: 1px solid var(--line); background: #fff; }
.descriptors { flex: none; margin: -1px 0 7px 3px; padding-left: 4px; border: 1px solid var(--line); border-right: 0; }
.descriptors .tools { height: 36px; padding-top: 5px; border-bottom: 1px solid var(--line); }
.clip { height: 126px; overflow: hidden; }
.c-mark { width: 36px; }
.c-name { width: 150px; }
.c-type { width: 59px; }
.fields thead th { height: 24px; padding-left: 7px; border-left: 1px solid #e2e2e2; }
.fields thead th:first-child { border-left: 0; }
.fields tbody tr { height: 22px; }
.fields tbody tr:nth-child(even) { height: 23px; }
.fields td { padding-left: 13px; border-bottom: 1px dotted #ececec; }
.fields td:first-child { padding-left: 6px; }
.mark { display: block; width: 20px; height: 20px; }
.hscroll { display: flex; align-items: center; height: 22px; padding-left: 5px; background: var(--panel); }
.hscroll svg { width: 8px; height: 10px; margin-right: 8px; }
.hscroll .thumb { width: 270px; height: 19px; background: var(--thumb); }
.side > .inspector-head { height: 28px; padding-top: 3px; padding-left: 10px; }
.inspector { flex: 1; min-height: 0; overflow: hidden; padding-left: 3px; }
.c-key { width: 244px; }
.props tr { height: 21px; }
.props tr:nth-child(4n) { height: 22px; }
.props th, .props td { border-bottom: 1px dotted #a8a8a8; }
.props th { padding: 0 5px 0 20px; border-right: 1px solid #a0a0a0; text-overflow: ellipsis; }
.props th.sub { padding-left: 32px; }
.props th.group { padding-left: 4px; }
.props th svg { width: 12px; height: 8px; margin-right: 4px; }
.props th .dbl { width: 12px; height: 10px; margin: 0 6px 0 -2px; color: #999; }
.props td { padding-left: 2px; }
.focus th { background: linear-gradient(90deg, #fff 18px, #e5e5e5 18px); }
.dim { color: #7d7d7d; }
.swatch { display: inline-block; width: 15px; height: 15px; margin: 0 4px 0 1px; border: 1px solid #222; vertical-align: -3px; }
.swatch.grey { background: var(--panel); }
.swatch.red { background: #f00; }
.swatch.blue { background: #d6e1f8; }
.grip { position: absolute; right: 596px; top: 529px; width: 3px; height: 34px; background: repeating-linear-gradient(#a5a5a5 0 3px, transparent 3px 5px); }

/* dialog */
.dialog {
  position: absolute;
  left: 79px;
  top: 468px;
  bottom: 0;
  display: flex;
  flex-direction: column;
  width: 932px;
  border: 1px solid #5a5a5a;
  border-bottom: 0;
  background: var(--panel);
}
.dlg-head { display: flex; flex: none; align-items: center; height: 38px; padding: 0 13px 0 10px; background: #393939; color: #e6e6e6; }
.dlg-head h2 { flex: 1; margin-left: 7px; font-size: 14px; }
.logo { width: 20px; height: 20px; }
.close svg { display: block; width: 13px; height: 13px; }
.dlg-tools { flex: none; padding-left: 1px; background: linear-gradient(90deg, transparent 119px, #dcdcdc 119px 120px, transparent 120px) #fff; border-bottom: 1px solid var(--line); }
.dlg-body { flex: 1; margin: 7px 11px 0 10px; padding: 1px 2px 0; border: 1px solid #8a8a8a; border-bottom: 0; background: #fff; }
.d-1 { width: 201px; }
.d-2 { width: 125px; }
.d-3 { width: 104px; }
.d-4 { width: 81px; }
.deps th { height: 24px; padding-left: 7px; border-left: 1px solid #e2e2e2; }
.deps th:first-child { padding-left: 6px; border-left: 0; }
.deps td { height: 22px; padding-left: 12px; border-bottom: 1px dotted #ececec; }
.deps td:first-child { padding-left: 11px; }
.deps .picked td { background: #a3d8ff; border-bottom: 1px solid #8fcdf8; }

.ink { position: absolute; left: 0; top: 0; width: 1922px; height: 847px; fill: none; stroke: #ff5a00; stroke-width: 4; stroke-linecap: round; stroke-linejoin: round; pointer-events: none; }
```
